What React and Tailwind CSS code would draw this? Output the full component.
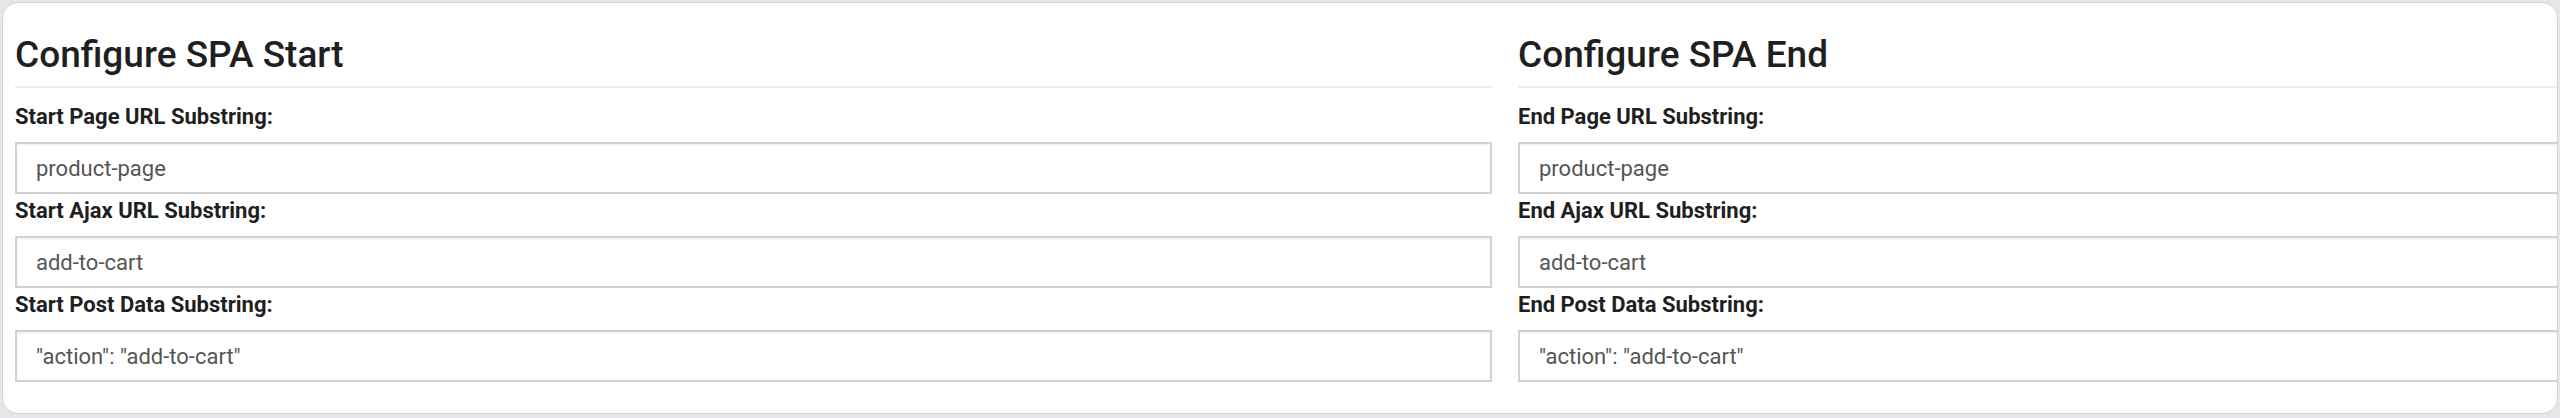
import React from "react";

function Field({ label, value }) {
  return (
    <div className="flex flex-col">
      <label className="text-[22px] leading-[26px] font-bold text-[#1f1f1f]">{label}</label>
      <div className="mt-[12px] h-[52px] w-full border-2 border-[#d2d2d2] bg-white flex items-center pl-[19px] text-[22px] text-[#555555] shadow-[inset_0_1px_2px_rgba(0,0,0,0.07)]">
        {value}
      </div>
    </div>
  );
}

function Column({ title, prefix }) {
  return (
    <div className="w-[1477px] shrink-0 flex flex-col">
      <h2 className="text-[37px] leading-[44px] font-medium text-[#1f1f1f] pb-[9px] border-b-2 border-[#ededed]">
        {title}
      </h2>
      <div className="mt-[16px] flex flex-col gap-[4px]">
        <Field label={`${prefix} Page URL Substring:`} value="product-page" />
        <Field label={`${prefix} Ajax URL Substring:`} value="add-to-cart" />
        <Field label={`${prefix} Post Data Substring:`} value={'"action": "add-to-cart"'} />
      </div>
    </div>
  );
}

export default function App() {
  return (
    <div className="w-[2560px] h-[418px] bg-[#e6e7eb] p-[2px] font-['Roboto',sans-serif]">
      <div className="h-[412px] bg-white rounded-[16px] border border-[#d4d4d8] overflow-hidden pl-[12px] pt-[30px] flex gap-[26px]">
        <Column title="Configure SPA Start" prefix="Start" />
        <Column title="Configure SPA End" prefix="End" />
      </div>
    </div>
  );
}
